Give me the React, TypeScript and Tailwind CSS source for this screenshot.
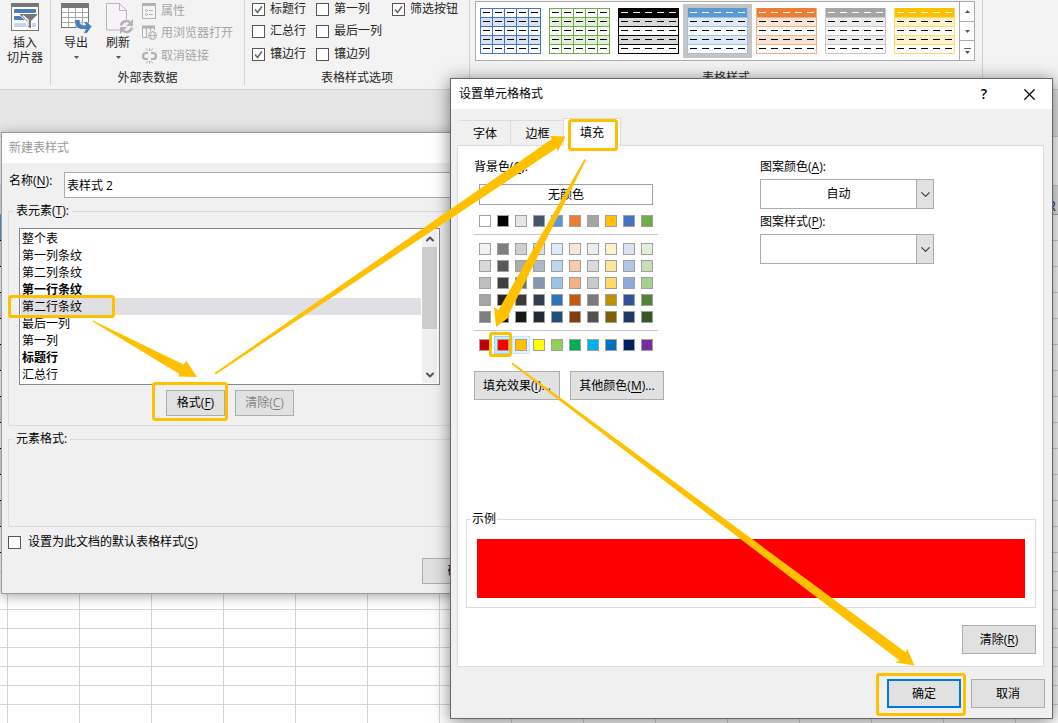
import React from 'react';
import clsx from 'clsx';
import { ChevronDown, ChevronUp, X } from 'lucide-react';

interface GalleryStyle {
  name: string;
  line: string;
  head: string;
  band: string;
  grid?: boolean;
  selected?: boolean;
}

const galleryStyles: GalleryStyle[] = [
  { name: 'blue-grid', line: '#4472c4', head: '#ffffff', band: '#d9e2f3', grid: true },
  { name: 'green-grid', line: '#70ad47', head: '#ffffff', band: '#e2efd9', grid: true },
  { name: 'black', line: '#000000', head: '#000000', band: '#d9d9d9' },
  { name: 'light-blue', line: '#9cc2e5', head: '#5b9bd5', band: '#deebf6', selected: true },
  { name: 'orange', line: '#f4b183', head: '#ed7d31', band: '#fbe5d5' },
  { name: 'gray', line: '#c9c9c9', head: '#a5a5a5', band: '#ededed' },
  { name: 'gold', line: '#ffd965', head: '#ffc000', band: '#fff2cc' },
];

const tableElements = [
  { name: '整个表' },
  { name: '第一列条纹' },
  { name: '第二列条纹' },
  { name: '第一行条纹', bold: true },
  { name: '第二行条纹', selected: true },
  { name: '最后一列' },
  { name: '第一列' },
  { name: '标题行', bold: true },
  { name: '汇总行' },
];

const themeColors = ['#ffffff', '#000000', '#e7e6e6', '#44546a', '#5b9bd5', '#ed7d31', '#a5a5a5', '#ffc000', '#4472c4', '#70ad47'];

const themeShades = [
  '#f2f2f2', '#7f7f7f', '#d0cece', '#d6dce4', '#deebf6', '#fbe5d5', '#ededed', '#fff2cc', '#d9e2f3', '#e2efd9',
  '#d8d8d8', '#595959', '#aeabab', '#adb9ca', '#bdd7ee', '#f7cbac', '#dbdbdb', '#fee599', '#b4c6e7', '#c5e0b3',
  '#bfbfbf', '#3f3f3f', '#757070', '#8496b0', '#9cc3e5', '#f4b183', '#c9c9c9', '#ffd965', '#8eaadb', '#a8d08d',
  '#a5a5a5', '#262626', '#3a3838', '#323f4f', '#2e75b5', '#c55a11', '#7b7b7b', '#bf9000', '#2f5496', '#538135',
  '#7f7f7f', '#0c0c0c', '#171616', '#222a35', '#1e4e79', '#833c0b', '#525252', '#7f6000', '#1f3864', '#375623',
];

const standardColors = ['#c00000', '#ff0000', '#ffc000', '#ffff00', '#92d050', '#00b050', '#00b0f0', '#0070c0', '#002060', '#7030a0'];

function SlicerIcon() {
  return (
    <svg width="28" height="28" viewBox="0 0 28 28" fill="none">
      <rect x="0.5" y="0.5" width="27" height="27" fill="#fff" stroke="#777" />
      <rect width="28" height="4" fill="#777" />
      <rect x="3" y="6" width="22" height="4" rx="1" fill="#4a7ebb" />
      <rect x="3" y="13" width="14" height="4" rx="1" fill="#4a7ebb" />
      <rect x="3" y="20" width="22" height="4" rx="1" fill="#c3d5ea" />
      <path d="M8.5 10.500h18v1.500l-6 6v8.500l-5-3.500v-5l-7-6z" fill="#777" stroke="#fff" />
      <path d="M12 12.500l5 4.500v6" stroke="#fff" strokeWidth="1.500" />
    </svg>
  );
}

function ExportIcon() {
  return (
    <svg width="31" height="31" viewBox="0 0 31 31" fill="none">
      <rect x="0.500" y="0.500" width="27" height="24" fill="#fff" stroke="#777" />
      <rect width="28" height="5" fill="#777" />
      <path d="M7.500 5v19M14.500 5v19M21.500 5v19M1 9.500h26M1 14.500h26M1 19.500h26" stroke="#a8a8a8" />
      <path
        d="M13.500 16.500h5.500c0 4.500 1.500 5.500 4 5.500h1.500l-2-3.500h3.500l5 5-5 7h-4l2.500-4h-2.500c-6.500 0-8.500-4-8.500-10z"
        fill="#4a7ebb"
        stroke="#fff"
        strokeWidth="0.800"
      />
    </svg>
  );
}

function RefreshIcon() {
  return (
    <svg width="32" height="31" viewBox="-4 0 32 31" fill="none">
      <path d="M0.500 0.500h13l7 7v19.500h-20z" fill="#f8f3f8" stroke="#b9b4b9" />
      <path d="M13.500 0.500v7h7" stroke="#b9b4b9" />
      <circle cx="20.500" cy="23.500" r="7.500" fill="#f3f3f3" />
      <path d="M15 22.500a5.500 5.500 0 0 1 9.500-2.500M26 24.500a5.500 5.500 0 0 1-9.500 2.500" stroke="#b3b3b3" strokeWidth="2.500" />
      <path d="M27 16v7h-7zM14 31v-7h7z" fill="#b3b3b3" />
    </svg>
  );
}

function PropertiesIcon() {
  return (
    <svg width="15" height="16" viewBox="0 0 15 16" fill="none" stroke="#b1b1b1">
      <rect x="0.500" y="0.500" width="13" height="15" fill="#f8f5f8" />
      <path d="M0 1.500h14" strokeWidth="3" />
      <path d="M7 7.500h4M7 11.500h4" />
      <circle cx="4.500" cy="7.500" r="1" />
      <circle cx="4.500" cy="11.500" r="1" />
    </svg>
  );
}

function BrowserIcon() {
  return (
    <svg width="15" height="16" viewBox="0 0 15 16" fill="none" stroke="#b1b1b1">
      <path d="M0 2h13" strokeWidth="3" />
      <path d="M0.500 3v9.500h5M4.500 3v9M8.500 3v3M12.500 3v2" />
      <circle cx="10.500" cy="10.500" r="4" fill="#f3f3f3" />
      <path d="M6.500 10.500h8M10.500 6.500c-3 3-3 5 0 8M10.500 6.500c3 3 3 5 0 8" />
    </svg>
  );
}

function UnlinkIcon() {
  return (
    <svg width="15" height="16" viewBox="0 0 15 16" fill="none" stroke="#b1b1b1">
      <path d="M6 5H4a3 3 0 0 0 0 6h2M9 5h2a3 3 0 0 1 0 6H9" strokeWidth="2.200" />
      <path d="M4 0.500l2 2.500M7.500 0v3M11 0.500L9 3M4 15.500l2-2.500M7.500 16v-3M11 15.500L9 13" />
    </svg>
  );
}

function Caret({ className }: { className?: string }) {
  return (
    <svg width="5" height="3" viewBox="0 0 5 3" className={className}>
      <path d="M0 0h5L2.500 3z" fill="#555" />
    </svg>
  );
}

function StyleThumb({ item }: { item: GalleryStyle }) {
  const rows = [0, 1, 2, 3, 4];
  return (
    <svg width="61" height="46" viewBox="0 0 61 46" shapeRendering="crispEdges">
      <rect width="61" height="46" fill="#fff" />
      <rect width="61" height="9" fill={item.head} />
      <rect y="9" width="61" height="9" fill={item.band} />
      <rect y="27" width="61" height="9" fill={item.band} />
      {(item.grid ? [0, 9, 18, 27, 36, 45] : [9, 18, 27, 36, 45]).map((y) => (
        <rect key={y} y={y} width="61" height="1" fill={item.line} />
      ))}
      {(item.grid ? [0, 12, 24, 36, 48, 60] : [0, 60]).map((x) => (
        <rect key={x} x={x} width="1" height="46" fill={item.line} />
      ))}
      {rows.map((r) =>
        rows.map((c) => (
          <rect
            key={`${r}-${c}`}
            x={3 + c * 12}
            y={4 + r * 9}
            width="7"
            height="1"
            fill={r === 0 && !item.grid ? '#fff' : '#000'}
          />
        )),
      )}
    </svg>
  );
}

interface CheckProps {
  label: React.ReactNode;
  checked?: boolean;
  className?: string;
}

function Check({ label, checked, className }: CheckProps) {
  return (
    <label className={clsx('flex items-center whitespace-nowrap', className)}>
      <span className="grid shrink-0">
        <input
          type="checkbox"
          defaultChecked={checked}
          className="peer col-start-1 row-start-1 size-[13px] appearance-none border border-[#555] bg-white"
        />
        <svg
          viewBox="0 0 13 13"
          fill="none"
          className="pointer-events-none invisible col-start-1 row-start-1 size-[13px] peer-checked:visible"
        >
          <path d="M3 6.500l2.500 3L10 3.500" stroke="#666" strokeWidth="1.500" />
        </svg>
      </span>
      {label}
    </label>
  );
}

function GroupLabel({ children }: { children: React.ReactNode }) {
  return <div className="mt-auto text-center leading-[14px]">{children}</div>;
}

function Ribbon() {
  return (
    <div className="flex h-[90px] border-b border-[#d2d2d2] bg-[#f3f3f3] pb-1 text-[#262626]">
      <div className="flex w-[51px] shrink-0 flex-col border-r border-[#d2d2d2]">
        <button type="button" className="flex flex-col items-center pt-[3px] leading-[15px]">
          <SlicerIcon />
          <span className="mt-1">插入</span>
          <span>切片器</span>
        </button>
      </div>

      <div className="flex w-[194px] shrink-0 flex-col border-r border-[#d2d2d2]">
        <div className="flex">
          <button type="button" className="flex w-[50px] flex-col items-center pt-[3px] leading-[15px]">
            <ExportIcon />
            <span className="mt-px">导出</span>
            <Caret className="mt-[6px]" />
          </button>
          <button type="button" className="flex w-[34px] flex-col items-center pt-[3px] leading-[15px]">
            <RefreshIcon />
            <span className="mt-px">刷新</span>
            <Caret className="mt-[6px]" />
          </button>
          <div className="flex flex-col pl-[7px] text-[#a6a6a6]">
            <button type="button" disabled className="flex h-[21px] items-center gap-1">
              <PropertiesIcon />
              属性
            </button>
            <button type="button" disabled className="flex h-[23px] items-center gap-1">
              <BrowserIcon />
              用浏览器打开
            </button>
            <button type="button" disabled className="flex h-[23px] items-center gap-1">
              <UnlinkIcon />
              取消链接
            </button>
          </div>
        </div>
        <GroupLabel>外部表数据</GroupLabel>
      </div>

      <div className="flex w-[225px] shrink-0 flex-col border-r border-[#d2d2d2]">
        <div className="grid grid-cols-[64px_76px_auto] pl-[7px]">
          <Check label="标题行" checked className="h-[18px] gap-[5px]" />
          <Check label="第一列" className="h-[18px] gap-[5px]" />
          <Check label="筛选按钮" checked className="h-[18px] gap-[5px]" />
          <Check label="汇总行" className="h-[26px] gap-[5px]" />
          <Check label="最后一列" className="col-span-2 h-[26px] gap-[5px]" />
          <Check label="镶边行" checked className="h-5 gap-[5px]" />
          <Check label="镶边列" className="col-span-2 h-5 gap-[5px]" />
        </div>
        <GroupLabel>表格样式选项</GroupLabel>
      </div>

      <div className="flex w-[513px] shrink-0 flex-col border-r border-[#d2d2d2] pt-px">
        <div className="ml-[5px] flex h-[60px] w-[500px] border border-[#ababab] bg-white">
          <div className="flex flex-1 py-[2px]">
            {galleryStyles.map((item) => (
              <button
                key={item.name}
                type="button"
                aria-label={item.name}
                className={clsx('h-[54px] w-[69px] p-1', item.selected && 'bg-[#c5c5c5]')}
              >
                <StyleThumb item={item} />
              </button>
            ))}
          </div>
          <div className="flex w-[15px] flex-col divide-y divide-[#ababab] border-l border-[#ababab]">
            <button type="button" aria-label="up" className="flex flex-1 items-center justify-center">
              <Caret className="rotate-180" />
            </button>
            <button type="button" aria-label="down" className="flex flex-1 items-center justify-center">
              <Caret />
            </button>
            <button type="button" aria-label="more" className="flex flex-1 flex-col items-center justify-center gap-[2px]">
              <span className="h-px w-[7px] bg-[#666]" />
              <Caret />
            </button>
          </div>
        </div>
        <GroupLabel>表格样式</GroupLabel>
      </div>
    </div>
  );
}

function Sheet() {
  const columns = Array.from({ length: 15 }, (_, i) => i);
  const tallRows = Array.from({ length: 13 }, (_, i) => i);
  const rows = Array.from({ length: 9 }, (_, i) => i);

  return (
    <div>
      <div className="h-[46px] bg-[#e6e6e6]" />
      <div className="h-[50px] border-y border-[#cfcfcf] bg-white" />
      <table className="w-[1088px] table-fixed border-separate border-spacing-0 bg-white">
        <thead>
          <tr className="h-[29px] bg-[#e6e6e6]">
            <th className="w-2 border-r border-b border-[#ababab]" />
            {columns.map((c) => (
              <th
                key={c}
                className="border-r border-b border-[#ababab] p-0 align-bottom text-sm leading-4 font-normal text-[#1f3a5f]"
              >
                {c === 14 && 'R'}
              </th>
            ))}
          </tr>
        </thead>
        <tbody>
          {tallRows.map((r) => (
            <tr key={r} className="h-[26px]">
              <td
                className={clsx(
                  'border-r border-b border-r-[#d4d4d4] border-b-black',
                  r === 0 ? 'bg-[#5b9bd5]' : r % 2 === 1 && 'bg-[#d0deef]',
                )}
              />
              {columns.map((c) => (
                <td key={c} className="border-r border-b border-[#d4d4d4]" />
              ))}
            </tr>
          ))}
          {rows.map((r) => (
            <tr key={r} className="h-[19px]">
              <td className="border-r border-b border-[#d4d4d4]" />
              {columns.map((c) => (
                <td key={c} className="border-r border-b border-[#d4d4d4]" />
              ))}
            </tr>
          ))}
        </tbody>
      </table>
    </div>
  );
}

function Mnemonic({ text, letter, tail }: { text: string; letter: string; tail?: string }) {
  return (
    <>
      {text}(<u className="underline-offset-2">{letter}</u>){tail}
    </>
  );
}

interface PushButtonProps {
  children: React.ReactNode;
  className: string;
  disabled?: boolean;
}

function PushButton({ children, className, disabled }: PushButtonProps) {
  return (
    <button
      type="button"
      disabled={disabled}
      className={clsx('bg-[#e1e1e1] whitespace-nowrap disabled:text-[#838383]', className)}
    >
      {children}
    </button>
  );
}

function NewStyleDialog() {
  return (
    <div
      role="dialog"
      aria-labelledby="new-style-title"
      className="absolute top-[132px] left-px w-[587px] border border-[#9b9b9b] bg-[#f0f0f0] shadow-[0_2px_12px_rgba(0,0,0,0.35)]"
    >
      <h2 id="new-style-title" className="flex h-[30px] items-center bg-white pl-[7px] text-[#999]">
        新建表样式
      </h2>
      <div className="px-[6px] pt-[9px] pb-[9px]">
        <div className="flex">
          <label htmlFor="style-name" className="w-14 pl-px leading-[18px]">
            <Mnemonic text="名称" letter="N" tail=":" />
          </label>
          <input
            id="style-name"
            defaultValue="表样式 2"
            className="h-[26px] min-w-0 flex-1 border border-[#ababab] bg-white px-[2px]"
          />
        </div>

        <fieldset className="mt-[5px] border border-[#dcdcdc]">
          <legend className="ml-1 px-[3px] leading-4">
            <Mnemonic text="表元素" letter="T" tail=":" />
          </legend>
          <div className="px-[10px] pt-[9px] pb-[9px]">
            <div className="flex h-[157px] w-[421px] border border-[#828790] bg-white py-px pr-[2px] pl-px">
              <ul role="listbox" className="mr-px flex-1">
                {tableElements.map((item) => (
                  <li
                    key={item.name}
                    role="option"
                    aria-selected={!!item.selected}
                    className={clsx(
                      'h-[17px] pl-px leading-[17px]',
                      item.bold && 'font-bold',
                      item.selected && 'bg-[#e0dfe4]',
                    )}
                  >
                    {item.name}
                  </li>
                ))}
              </ul>
              <div className="flex w-[15px] flex-col items-center bg-[#f0f0f0]">
                <ChevronUp size={12} strokeWidth={4} className="mt-[3px] text-[#555]" />
                <div className="mt-[2px] h-[82px] w-full bg-[#cdcdcd]" />
                <ChevronDown size={12} strokeWidth={4} className="mt-auto mb-[2px] text-[#555]" />
              </div>
            </div>
            <div className="mt-[5px] flex gap-[10px] pl-[147px]">
              <PushButton className="h-[26px] w-[59px] border border-[#adadad]">
                <Mnemonic text="格式" letter="F" />
              </PushButton>
              <PushButton className="h-[26px] w-[59px] border border-[#adadad]" disabled>
                <Mnemonic text="清除" letter="C" />
              </PushButton>
            </div>
          </div>
        </fieldset>

        <fieldset className="mt-[5px] h-24 border border-[#dcdcdc]">
          <legend className="ml-1 px-[3px] leading-4">元素格式:</legend>
        </fieldset>

        <Check
          label={
            <span>
              <Mnemonic text="设置为此文档的默认表格样式" letter="S" />
            </span>
          }
          className="mt-[7px] h-4 gap-[7px]"
        />
        <div className="mt-2 flex justify-end pr-[84px]">
          <PushButton className="h-[26px] w-[75px] border border-[#adadad]">确定</PushButton>
        </div>
      </div>
    </div>
  );
}

function Swatches({ colors, marked }: { colors: string[]; marked?: boolean }) {
  return (
    <div className="ml-[5px] grid w-[174px] grid-cols-10 gap-x-[6px] gap-y-[5px]">
      {colors.map((color, i) => (
        <button
          key={i}
          type="button"
          aria-label={color}
          className={clsx(
            'size-3 border border-[#a0a0a0]',
            marked && i === 1 && 'shadow-[0_0_0_2px_#cce8ff,0_0_0_3px_#99d1ff]',
            marked && i === 2 && 'shadow-[0_0_0_2px_#e5f3ff,0_0_0_3px_#cce8ff]',
          )}
          style={{ backgroundColor: color }}
        />
      ))}
    </div>
  );
}

interface ComboProps {
  id: string;
  label: React.ReactNode;
  value: string;
  className?: string;
}

function Combo({ id, label, value, className }: ComboProps) {
  return (
    <div className={className}>
      <label htmlFor={id} className="block leading-4">
        {label}
      </label>
      <div className="mt-1 grid h-[30px] w-[174px]">
        <select
          id={id}
          className="col-start-1 row-start-1 appearance-none border border-[#ababab] bg-white pr-[17px] [text-align-last:center]"
        >
          <option>{value}</option>
        </select>
        <span className="pointer-events-none col-start-1 row-start-1 flex w-[18px] items-center justify-center justify-self-end border border-[#ababab] bg-[#e1e1e1]">
          <ChevronDown size={15} className="shrink-0 text-[#444]" />
        </span>
      </div>
    </div>
  );
}

function FormatCellsDialog() {
  return (
    <div
      role="dialog"
      aria-labelledby="format-title"
      className="absolute top-[78px] left-[450px] w-[603px] border border-[#666] bg-[#f0f0f0] shadow-[0_2px_16px_rgba(0,0,0,0.5)]"
    >
      <div className="flex h-[30px] items-center bg-white pl-2">
        <h2 id="format-title" className="mr-auto">
          设置单元格格式
        </h2>
        <button type="button" className="w-[44px] text-sm font-semibold">
          ?
        </button>
        <button type="button" aria-label="close" className="flex w-[46px] justify-center">
          <X size={19} strokeWidth={1.500} />
        </button>
      </div>

      <div className="pr-2 pl-[6px]">
        <div role="tablist" className="mt-[9px] flex items-end pl-[2px]">
          <button type="button" role="tab" className="h-[25px] w-[52px] border-t border-r border-[#dcdcdc] pt-px pl-px">
            字体
          </button>
          <button type="button" role="tab" className="h-[25px] w-[52px] border-t border-[#dcdcdc] pt-px pl-px">
            边框
          </button>
          <button
            type="button"
            role="tab"
            aria-selected
            className="relative -mb-px h-7 w-[58px] border border-b-0 border-[#dcdcdc] bg-white"
          >
            填充
          </button>
        </div>

        <div role="tabpanel" className="border border-[#dcdcdc] bg-white pt-[13px] pb-3">
          <div className="flex pl-4">
            <div className="w-[286px]">
              <div className="leading-4">
                <Mnemonic text="背景色" letter="C" tail=":" />
              </div>
              <button type="button" className="mt-[9px] mb-[10px] ml-[5px] block h-[21px] w-[174px] border border-[#a0a0a0]">
                无颜色
              </button>
              <Swatches colors={themeColors} />
              <hr className="mt-[7px] mb-2 w-[184px] border-[#c8c8c8]" />
              <Swatches colors={themeShades} />
              <hr className="mt-[7px] mb-2 w-[184px] border-[#c8c8c8]" />
              <Swatches colors={standardColors} marked />
              <div className="mt-5 flex gap-[10px]">
                <PushButton className="h-[29px] w-[86px] border border-[#adadad]">
                  <Mnemonic text="填充效果" letter="I" tail="..." />
                </PushButton>
                <PushButton className="h-[29px] w-[94px] border border-[#adadad]">
                  <Mnemonic text="其他颜色" letter="M" tail="..." />
                </PushButton>
              </div>
            </div>
            <div>
              <Combo id="pattern-color" label={<Mnemonic text="图案颜色" letter="A" tail=":" />} value="自动" />
              <Combo id="pattern-style" label={<Mnemonic text="图案样式" letter="P" tail=":" />} value="" className="mt-[5px]" />
            </div>
          </div>

          <fieldset className="mt-[111px] mr-[7px] ml-2 border border-[#dcdcdc] px-[10px] pb-[9px]">
            <legend className="-ml-[6px] px-px leading-4">示例</legend>
            <div className="mt-3 h-[59px] bg-[#ff0000]" />
          </fieldset>

          <div className="mt-[17px] flex justify-end pr-[7px]">
            <PushButton className="h-[29px] w-[74px] border border-[#adadad]">
              <Mnemonic text="清除" letter="R" />
            </PushButton>
          </div>
        </div>
      </div>

      <div className="flex justify-end gap-[10px] pt-3 pr-[7px] pb-[10px]">
        <PushButton className="h-[29px] w-[74px] border-2 border-[#0078d7]">确定</PushButton>
        <PushButton className="h-[29px] w-[74px] border border-[#adadad]">取消</PushButton>
      </div>
    </div>
  );
}

// Step markers and the arrows that lead from one to the next
function Callouts() {
  return (
    <svg width="1058" height="723" viewBox="0 0 1058 723" className="pointer-events-none absolute top-0 left-0">
      <g fill="none" stroke="#ffc000" strokeWidth="3">
        <rect x="9.500" y="296.500" width="104" height="20" rx="2" />
        <rect x="153.500" y="383.500" width="73" height="36" rx="2" />
        <rect x="569.500" y="120.500" width="47" height="29" rx="2" />
        <rect x="490.500" y="333.500" width="20" height="22" rx="2" />
        <rect x="877.500" y="674.500" width="87" height="40" rx="2" />
      </g>
      <g fill="#ffc000">
        <path d="M93 320.500L183.500 364.500L186.500 361L197 377L178 376.500L179.500 374L92.500 321.500z" />
        <path d="M214.500 373L552 139L550 136L565.500 136.500L557.500 152L557 148L215.500 374.500z" />
        <path d="M584.500 159L586 160L508.500 315L510 316.500L496 327L494 307.500L498.500 310z" />
        <path d="M512.500 362.500L906 652.500L907 648.500L914.500 665.500L895.500 662.500L899.500 660.500L511.500 364z" />
      </g>
    </svg>
  );
}

export default function App() {
  return (
    <div className="relative min-h-screen overflow-hidden bg-white font-['Open_Sans','Noto_Sans_CJK_SC',sans-serif] text-xs text-black">
      <Ribbon />
      <Sheet />
      <NewStyleDialog />
      <FormatCellsDialog />
      <Callouts />
    </div>
  );
}
